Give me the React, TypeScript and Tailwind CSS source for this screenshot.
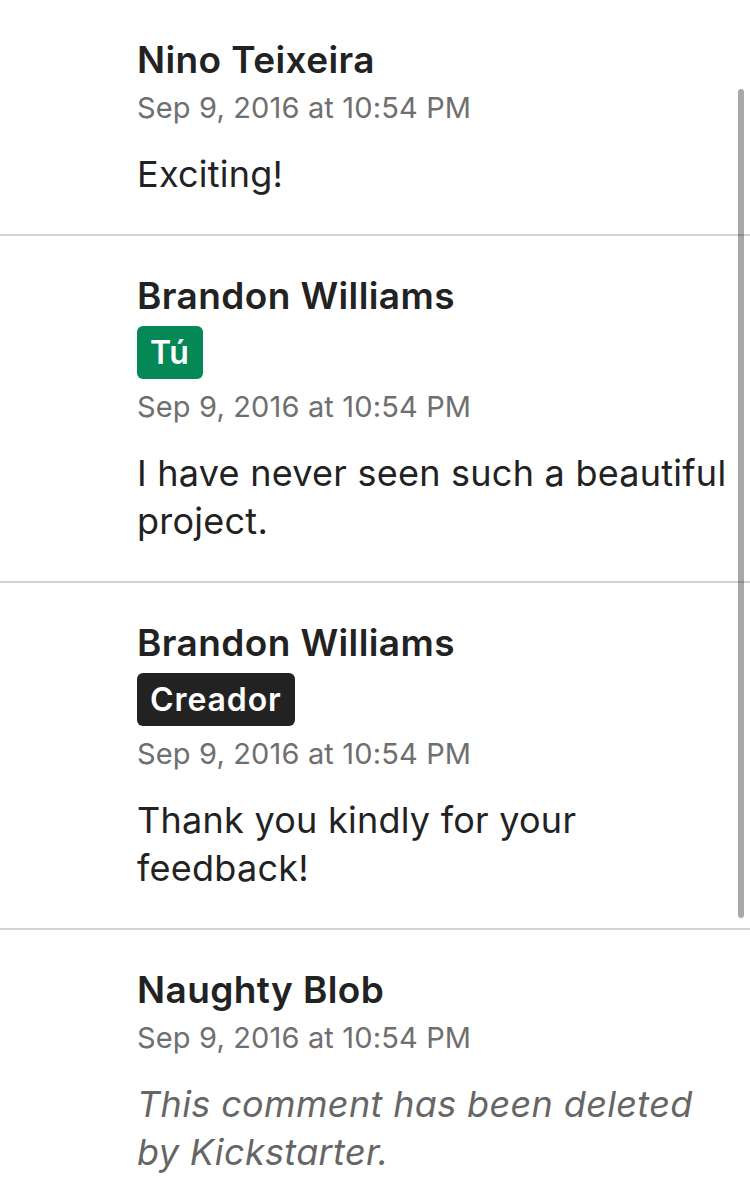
import React from "react";

type Comment = {
  name: string;
  badge?: "you" | "creator";
  date: string;
  body: string;
  deleted?: boolean;
};

const comments: Comment[] = [
  { name: "Nino Teixeira", date: "Sep 9, 2016 at 10:54 PM", body: "Exciting!" },
  {
    name: "Brandon Williams",
    badge: "you",
    date: "Sep 9, 2016 at 10:54 PM",
    body: "I have never seen such a beautiful project.",
  },
  {
    name: "Brandon Williams",
    badge: "creator",
    date: "Sep 9, 2016 at 10:54 PM",
    body: "Thank you kindly for your feedback!",
  },
  {
    name: "Naughty Blob",
    date: "Sep 9, 2016 at 10:54 PM",
    body: "This comment has been deleted by Kickstarter.",
    deleted: true,
  },
];

function Badge({ kind }: { kind: "you" | "creator" }) {
  if (kind === "you") {
    return (
      <div className="mt-[10px] flex">
        <span className="h-[53px] rounded-[6px] bg-[#038856] px-[13px] text-[32px] font-semibold leading-[53px] tracking-[0.6px] text-white">
          Tú
        </span>
      </div>
    );
  }
  return (
    <div className="mt-[10px] flex">
      <span className="h-[53px] rounded-[6px] bg-[#222222] px-[13px] text-[32px] font-semibold leading-[53px] tracking-[0.9px] text-white">
        Creador
      </span>
    </div>
  );
}

function CommentRow({ c, last }: { c: Comment; last: boolean }) {
  return (
    <div
      className={
        last
          ? "pl-[137px] pr-[15px] pt-[40px] pb-[36px]"
          : "border-b-2 border-[#d3d3d3] pl-[137px] pr-[15px] pt-[40px] pb-[36px]"
      }
    >
      <div className="text-[37px] font-semibold leading-[40px] tracking-[0.4px] text-[#222222]">
        {c.name}
      </div>
      {c.badge && <Badge kind={c.badge} />}
      <div className="mt-[10px] text-[29px] leading-[36px] tracking-[0.15px] text-[#6f6f6f]">
        {c.date}
      </div>
      <div
        className={
          c.deleted
            ? "mt-[24px] text-[36px] italic leading-[48px] tracking-[0.35px] text-[#666666]"
            : "mt-[24px] text-[36px] leading-[48px] tracking-[0.25px] text-[#222222]"
        }
      >
        {c.body}
      </div>
    </div>
  );
}

export default function App() {
  return (
    <div className="relative h-[1200px] w-[750px] overflow-hidden bg-white font-['Inter',sans-serif]">
      {comments.map((c, i) => (
        <CommentRow key={i} c={c} last={i === comments.length - 1} />
      ))}
      <div className="absolute right-[6px] top-[89px] h-[829px] w-[6px] rounded-full bg-black/[0.34]" />
    </div>
  );
}
